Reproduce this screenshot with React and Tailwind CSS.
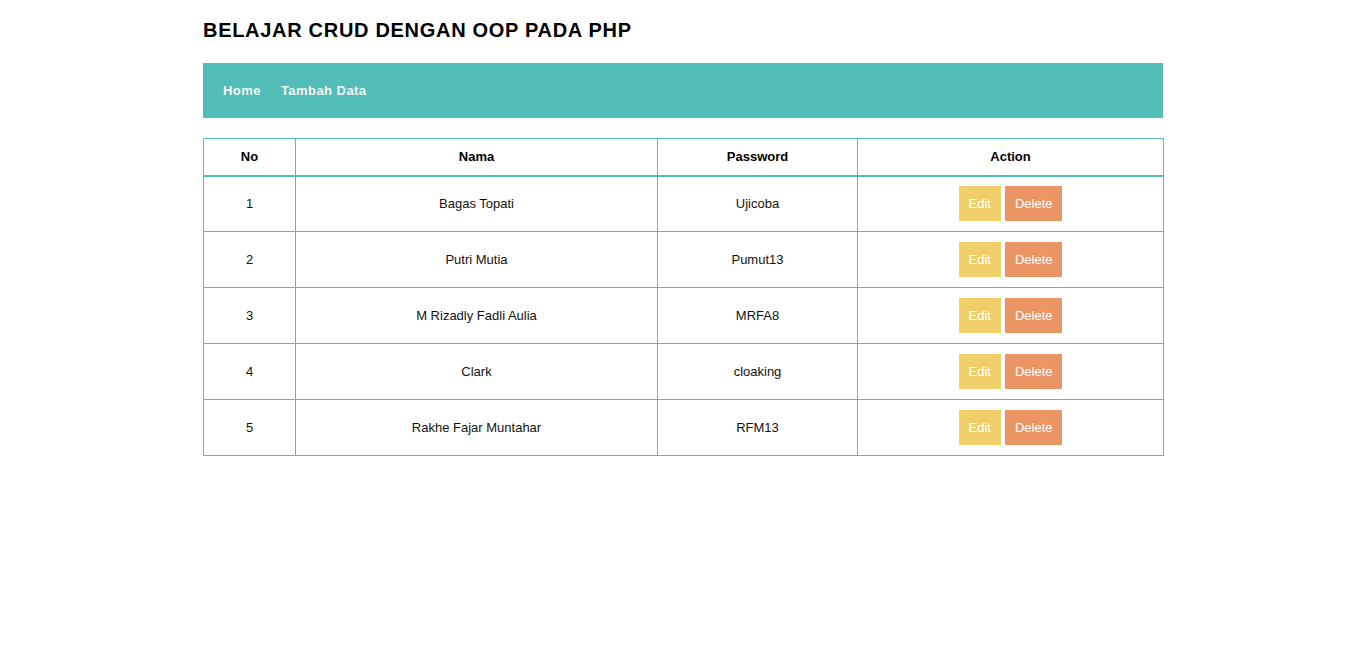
import React from "react";

const users = [
  { id: 1, nama: "Bagas Topati", password: "Ujicoba" },
  { id: 2, nama: "Putri Mutia", password: "Pumut13" },
  { id: 3, nama: "M Rizadly Fadli Aulia", password: "MRFA8" },
  { id: 4, nama: "Clark", password: "cloaking" },
  { id: 5, nama: "Rakhe Fajar Muntahar", password: "RFM13" },
];

export default function App() {
  return (
    <div
      className="min-h-screen bg-white text-[#111]"
      style={{ fontFamily: '"Liberation Sans", Arial, sans-serif' }}
    >
      <div className="w-[960px] mx-auto pt-[18px]">
        <h1 className="text-[20px] leading-[24px] font-bold tracking-[0.7px] text-black">
          BELAJAR CRUD DENGAN OOP PADA PHP
        </h1>

        {/* Nav */}
        <nav className="mt-[21px] h-[55px] bg-[#52bdb6] flex items-center px-5 gap-5">
          <a href="#" className="text-[13px] font-bold tracking-[0.45px] text-[#f4f4f4]">
            Home
          </a>
          <a href="#" className="text-[13px] font-bold tracking-[0.45px] text-[#f4f4f4]">
            Tambah Data
          </a>
        </nav>

        {/* Table */}
        <table className="mt-5 w-full table-fixed border-collapse text-[13px]">
          <colgroup>
            <col className="w-[92px]" />
            <col className="w-[362px]" />
            <col className="w-[200px]" />
            <col className="w-[306px]" />
          </colgroup>
          <thead>
            <tr className="h-[37px]">
              {["No", "Nama", "Password", "Action"].map((h) => (
                <th
                  key={h}
                  className="border border-[#52bdb6] border-b-2 font-bold text-center text-black"
                >
                  {h}
                </th>
              ))}
            </tr>
          </thead>
          <tbody>
            {users.map((u) => (
              <tr key={u.id} className="h-[56px]">
                <td className="border border-[#52bdb6] text-center">{u.id}</td>
                <td className="border border-[#52bdb6] text-center">{u.nama}</td>
                <td className="border border-[#52bdb6] text-center">{u.password}</td>
                <td className="border border-[#52bdb6] text-center">
                  <div className="flex justify-center gap-1">
                    <button className="bg-[#f0ce6a] text-white px-2.5 h-[35px] text-[13px]">
                      Edit
                    </button>
                    <button className="bg-[#eb9565] text-white px-2.5 h-[35px] text-[13px]">
                      Delete
                    </button>
                  </div>
                </td>
              </tr>
            ))}
          </tbody>
        </table>
      </div>
    </div>
  );
}
